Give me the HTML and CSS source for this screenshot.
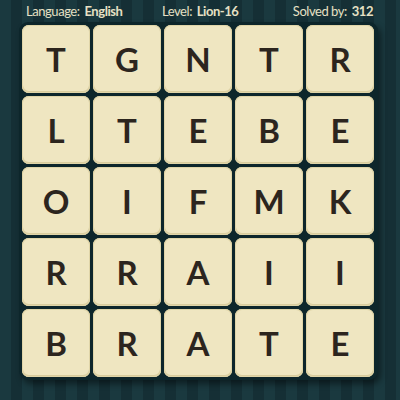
FILE: index.html
```html
<!DOCTYPE html>
<html>
<head>
<meta charset="utf-8">
<link rel="stylesheet" href="styles.css">
</head>
<body>
<div class="page">
  <div class="header">
    <div class="item">Language: <b>English</b></div>
    <div class="item">Level: <b>Lion-16</b></div>
    <div class="item right">Solved by: <b>312</b></div>
  </div>
  <div class="board">
    <div class="tile">T</div><div class="tile">G</div><div class="tile">N</div><div class="tile">T</div><div class="tile">R</div>
    <div class="tile">L</div><div class="tile">T</div><div class="tile">E</div><div class="tile">B</div><div class="tile">E</div>
    <div class="tile">O</div><div class="tile">I</div><div class="tile">F</div><div class="tile">M</div><div class="tile">K</div>
    <div class="tile">R</div><div class="tile">R</div><div class="tile">A</div><div class="tile">I</div><div class="tile">I</div>
    <div class="tile">B</div><div class="tile">R</div><div class="tile">A</div><div class="tile">T</div><div class="tile">E</div>
  </div>
</div>
</body>
</html>
```
FILE: styles.css
```css
html, body {
  margin: 0;
  padding: 0;
}
body {
  width: 400px;
  height: 400px;
  overflow: hidden;
  background-color: #173238;
  background-image: repeating-linear-gradient(90deg, #1a393f 0px, #1a393f 11px, #152f35 11px, #152f35 22px);
  font-family: "Lato", "Open Sans", sans-serif;
}
.page {
  display: flex;
  flex-direction: column;
}
.header {
  display: grid;
  grid-template-columns: 136px 1fr auto;
  height: 22px;
  padding: 0 27px 0 26px;
  align-items: center;
  color: #e6e0c4;
  font-size: 13px;
  letter-spacing: -0.45px;
}
.header b {
  font-weight: 700;
  margin-left: 2px;
}
.right {
  text-align: right;
}
.board {
  margin-left: 19px;
  width: 353px;
  padding: 3px;
  display: grid;
  grid-template-columns: repeat(5, 68px);
  grid-auto-rows: 68px;
  gap: 3px;
  background: #0d262b;
  border-radius: 9px;
  box-shadow: 3px 4px 6px rgba(0, 0, 0, 0.45);
}
.tile {
  background: #efe6c1;
  border-radius: 7px;
  display: flex;
  align-items: center;
  justify-content: center;
  font-size: 33px;
  font-weight: 700;
  color: #2c251e;
  box-shadow: inset 0 0 0 1px #e0d5a8, inset 0 -1px 0 1px #d9cd9e;
}
```
